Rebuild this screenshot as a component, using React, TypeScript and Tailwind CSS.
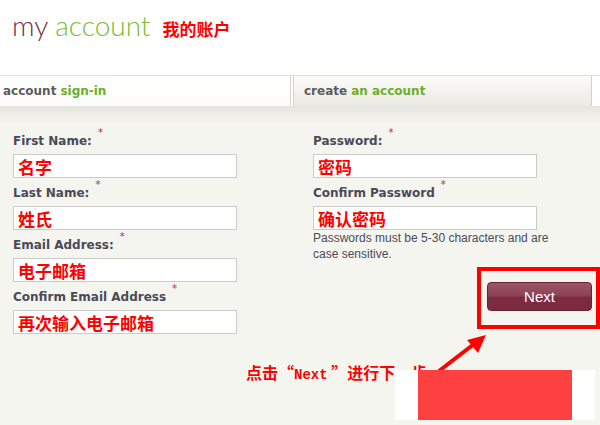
import React from 'react';

const leftFields = [
  { label: 'First Name:', value: '名字' },
  { label: 'Last Name:', value: '姓氏' },
  { label: 'Email Address:', value: '电子邮箱' },
  { label: 'Confirm Email Address', value: '再次输入电子邮箱' },
];

const rightFields = [
  { label: 'Password:', value: '密码' },
  { label: 'Confirm Password', value: '确认密码' },
];

function Field({ label, value }: { label: string; value: string }) {
  return (
    <div className="mt-[7px]">
      <div className="h-4 text-[12px] leading-4 font-bold text-[#4a4a58] font-['DejaVu_Sans',sans-serif] whitespace-nowrap">
        {label}
        <span className="ml-[6px] inline-block -translate-y-[9px] text-[10px] leading-none font-normal text-[#993366]">*</span>
      </div>
      <div className="mt-[5px] flex h-6 w-[224px] items-center border border-[#cbcbcb] bg-white pl-[4px] text-[17px] font-bold leading-none text-[#ff0000] font-['Noto_Sans_CJK_SC',sans-serif]">
        {value}
      </div>
    </div>
  );
}

export default function App() {
  return (
    <div className="relative h-[425px] w-[600px] overflow-hidden bg-[#f5f5f0] font-['Liberation_Sans',sans-serif]">
      {/* header */}
      <div className="flex h-[75px] items-baseline bg-white pl-[12px] pt-[11px]">
        <span className="text-[28px] font-light leading-none font-['Lato',sans-serif]">
          <span className="text-[#7a2e45]">my</span>{' '}
          <span className="text-[#7cbb35]">account</span>
        </span>
        <span className="ml-[12px] text-[17px] font-bold leading-none text-[#ff0000] font-['Noto_Sans_CJK_SC',sans-serif]">
          我的账户
        </span>
      </div>

      {/* tabs */}
      <div className="flex h-[31px] border-t border-[#e0ded8] bg-white">
        <div className="flex w-[291px] items-center border-r border-[#d3d2cb] bg-gradient-to-b from-white to-[#fcfcfa] pl-[3px] text-[12px] font-bold font-['DejaVu_Sans',sans-serif]">
          <span className="text-[#5c5c5c]">account</span>
          <span className="ml-[4px] text-[#6aaf2a]">sign-in</span>
        </div>
        <div className="ml-[2px] flex w-[299px] items-center border-x border-[#d3d2cb] bg-gradient-to-b from-[#fbfbf8] to-[#ebeae4] pl-[10px] text-[12px] font-bold font-['DejaVu_Sans',sans-serif]">
          <span className="text-[#5c5c5c]">create</span>
          <span className="ml-[4px] text-[#6aaf2a]">an account</span>
        </div>
      </div>
      <div className="h-[16px] bg-gradient-to-b from-[#e6e4de] to-[#f4f4ef]" />

      {/* form */}
      <div className="flex pt-[4px]">
        <div className="w-[300px] pl-[13px]">
          {leftFields.map((f) => (
            <Field key={f.label} label={f.label} value={f.value} />
          ))}
        </div>
        <div className="flex w-[292px] flex-col pl-[13px]">
          {rightFields.map((f) => (
            <Field key={f.label} label={f.label} value={f.value} />
          ))}
          <p className="w-[255px] text-[12px] leading-4 text-[#4a4a58]">
            Passwords must be 5-30 characters and are case sensitive.
          </p>
          <div className="mt-[20px] flex justify-end">
            <button className="h-[29px] w-[105px] rounded-[4px] border border-[#6c2237] bg-[linear-gradient(to_bottom,#9a5565_0%,#8c4255_48%,#7d2b41_52%,#7a2a40_100%)] text-[15px] leading-none text-white">
              Next
            </button>
          </div>
        </div>
      </div>

      {/* annotation overlay */}
      <div className="absolute left-[477px] top-[267px] h-[62px] w-[123px] border-[4px] border-[#ff0000]" />
      <svg className="absolute left-0 top-0" width="600" height="425">
        <line x1="439" y1="371" x2="474" y2="344" stroke="#ff0000" strokeWidth="4" />
        <polygon points="486,335 467,340 478,353" fill="#ff0000" />
      </svg>
      <div className="absolute left-[246px] top-[364px] text-[16px] font-bold leading-4 text-[#ff0000] font-['Noto_Sans_CJK_SC',sans-serif] whitespace-nowrap">
        点击“<span className="text-[14px] font-['Liberation_Mono',monospace]">Next</span> ”进行下一步
      </div>
      <div className="absolute left-[395px] top-[370px] flex h-[50px] w-[200px] justify-center bg-white">
        <div className="h-full w-[154px] bg-[#ff4040]" />
      </div>
    </div>
  );
}
